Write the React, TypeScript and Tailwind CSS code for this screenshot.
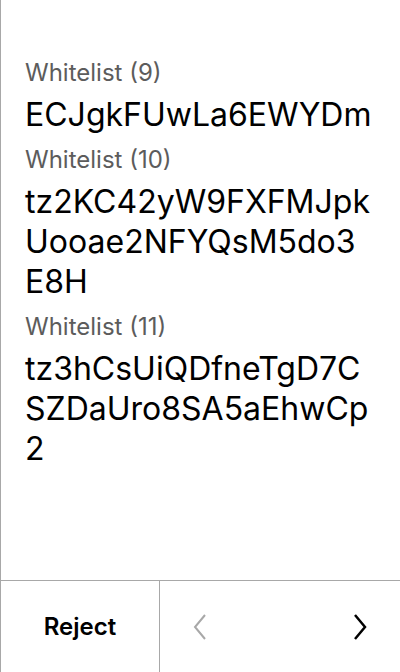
import { useState } from "react";

type Entry = {
  label: string;
  value: string;
};

const entries: Entry[] = [
  { label: "Whitelist (9)", value: "ECJgkFUwLa6EWYDm" },
  { label: "Whitelist (10)", value: "tz2KC42yW9FXFMJpkUooae2NFYQsM5do3E8H" },
  { label: "Whitelist (11)", value: "tz3hCsUiQDfneTgD7CSZDaUro8SA5aEhwCp2" },
];

export default function App() {
  const [page] = useState(0);

  return (
    <div
      className="w-[400px] h-[672px] flex flex-col bg-white border-l border-[#a8a8a8] text-black"
      style={{ fontFamily: "Inter, 'Liberation Sans', sans-serif" }}
    >
      <div className="flex-1 pt-[57px] pl-6 pr-[26px]">
        {entries.map((el) => {
          return (
            <div key={el.label} className="flex flex-col">
              <p className="text-[24px] leading-[32px] text-[#5c5c5c]">{el.label}</p>
              <p className="text-[32px] leading-[40px] mt-[6px] mb-[9px] break-all">{el.value}</p>
            </div>
          );
        })}
      </div>
      <div className="h-[92px] flex border-t border-[#a8a8a8]">
        <button className="w-[159px] flex items-center justify-center text-[24px] font-semibold border-r border-[#a8a8a8]">
          Reject
        </button>
        <div className="flex-1 flex items-center justify-between">
          <button className="w-20 h-full flex items-center justify-center" disabled={page === 0}>
            <svg width="14" height="26" viewBox="0 0 14 26" fill="none">
              <path d="M12 1L2 13l10 12" stroke="#a8a8a8" strokeWidth="2" />
            </svg>
          </button>
          <button className="w-20 h-full flex items-center justify-center">
            <svg width="14" height="26" viewBox="0 0 14 26" fill="none">
              <path d="M2 1l10 12L2 25" stroke="#000" strokeWidth="2.5" />
            </svg>
          </button>
        </div>
      </div>
    </div>
  );
}
